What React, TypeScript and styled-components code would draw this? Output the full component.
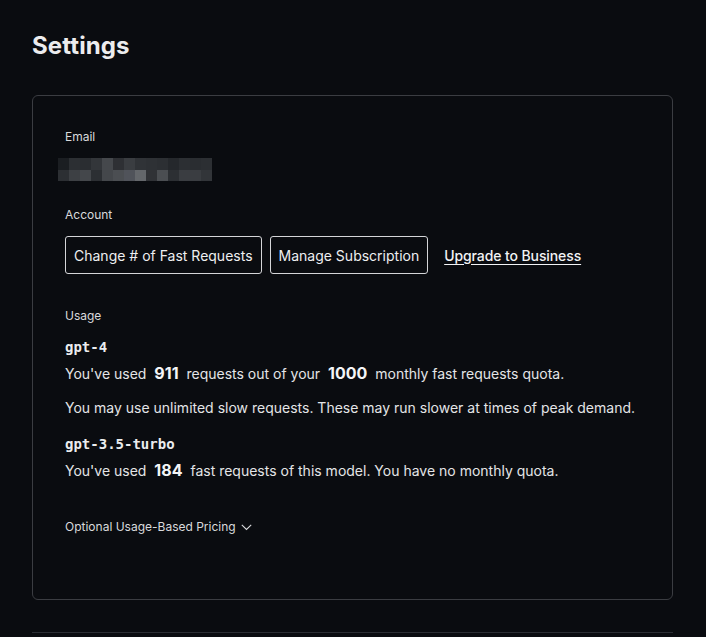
import styled, { createGlobalStyle } from 'styled-components';

const GlobalStyle = createGlobalStyle`
  html, body {
    margin: 0;
    padding: 0;
    background: #0a0c10;
  }
  body {
    font-family: Inter, 'Noto Sans', 'Liberation Sans', sans-serif;
    color: #e8e9eb;
    -webkit-font-smoothing: antialiased;
  }
`;

const Page = styled.div`
  padding: 28px 33px 0 32px;
`;

const Title = styled.h1`
  margin: 0;
  font-size: 24px;
  line-height: 36px;
  font-weight: 700;
  color: #ececee;
  letter-spacing: 0.1px;
`;

const Card = styled.section`
  margin-top: 31px;
  height: 505px;
  box-sizing: border-box;
  border: 1px solid #3b3d42;
  border-radius: 6px;
  padding: 33px 32px 32px;
  display: flex;
  flex-direction: column;
`;

const Label = styled.div<{ $gap?: number }>`
  font-size: 12px;
  line-height: 16px;
  color: #d9dadc;
  margin-top: ${(p) => p.$gap ?? 0}px;
`;

const Mosaic = styled.div`
  margin-top: 13px;
  margin-left: -7px;
  display: grid;
  grid-template-columns: repeat(14, 11px);
  grid-auto-rows: 11.5px;
  width: fit-content;
`;

const Tile = styled.div<{ $c: string }>`
  background: ${(p) => p.$c};
`;

const ButtonRow = styled.div`
  margin-top: 13px;
  display: flex;
  align-items: center;
  gap: 8px;
`;

const OutlineButton = styled.button`
  height: 38px;
  padding: 0 8px;
  background: transparent;
  border: 1px solid #d4d5d8;
  border-radius: 3px;
  color: #eeeff1;
  font-family: inherit;
  font-size: 14px;
  cursor: pointer;
`;

const TextLink = styled.a`
  margin-left: 8px;
  color: #f2f3f5;
  font-size: 14px;
  font-weight: 500;
  letter-spacing: -0.1px;
  text-decoration: underline;
  text-underline-offset: 3px;
  cursor: pointer;
`;

const Model = styled.div<{ $gap: number }>`
  margin-top: ${(p) => p.$gap}px;
  font-family: 'DejaVu Sans Mono', 'Liberation Mono', monospace;
  font-weight: 700;
  font-size: 14px;
  line-height: 20px;
  color: #ebecee;
`;

const Line = styled.p<{ $gap: number }>`
  margin: ${(p) => p.$gap}px 0 0;
  font-size: 14px;
  line-height: 22px;
  color: #e4e5e7;
`;

const Count = styled.strong`
  font-size: 16px;
  font-weight: 700;
  color: #f4f5f7;
  padding: 0 4px;
`;

const Toggle = styled.button`
  margin-top: 37px;
  align-self: flex-start;
  display: flex;
  align-items: center;
  gap: 5px;
  padding: 0;
  background: none;
  border: 0;
  color: #d9dadc;
  font-family: inherit;
  font-size: 12px;
  line-height: 16px;
  cursor: pointer;
`;

const Footer = styled.div`
  margin-top: 32px;
  border-top: 1px solid #2a2d33;
  height: 8px;
`;

const mosaic = [
  '#1b1e22', '#2c2f33', '#2a2d31', '#33363a', '#45484c', '#2e3034', '#3a3d41',
  '#303337', '#2e3135', '#2c2f33', '#25282c', '#2c2f33', '#2a2d31', '#2c2f33',
  '#2c2f33', '#3d4044', '#44474b', '#2c2f33', '#44474b', '#4b4e52', '#50535a',
  '#64676b', '#303236', '#4b4e52', '#2c2f33', '#3a3d41', '#3a3d41', '#323539',
];

export default function App() {
  return (
    <>
      <GlobalStyle />
      <Page>
        <Title>Settings</Title>
        <Card>
          <Label>Email</Label>
          <Mosaic>
            {mosaic.map((c, i) => (
              <Tile key={i} $c={c} />
            ))}
          </Mosaic>

          <Label $gap={26}>Account</Label>
          <ButtonRow>
            <OutlineButton>Change # of Fast Requests</OutlineButton>
            <OutlineButton>Manage Subscription</OutlineButton>
            <TextLink>Upgrade to Business</TextLink>
          </ButtonRow>

          <Label $gap={34}>Usage</Label>
          <Model $gap={13}>gpt-4</Model>
          <Line $gap={5}>
            You've used <Count>911</Count> requests out of your <Count>1000</Count> monthly fast
            requests quota.
          </Line>
          <Line $gap={12}>
            You may use unlimited slow requests. These may run slower at times of peak demand.
          </Line>
          <Model $gap={15}>gpt-3.5-turbo</Model>
          <Line $gap={5}>
            You've used <Count>184</Count> fast requests of this model. You have no monthly quota.
          </Line>

          <Toggle>
            Optional Usage-Based Pricing
            <svg width="11" height="7" viewBox="0 0 11 7" fill="none">
              <path d="M0.8 0.8L5.5 5.5L10.2 0.8" stroke="#d9dadc" strokeWidth="1.1" />
            </svg>
          </Toggle>
        </Card>
        <Footer />
      </Page>
    </>
  );
}
